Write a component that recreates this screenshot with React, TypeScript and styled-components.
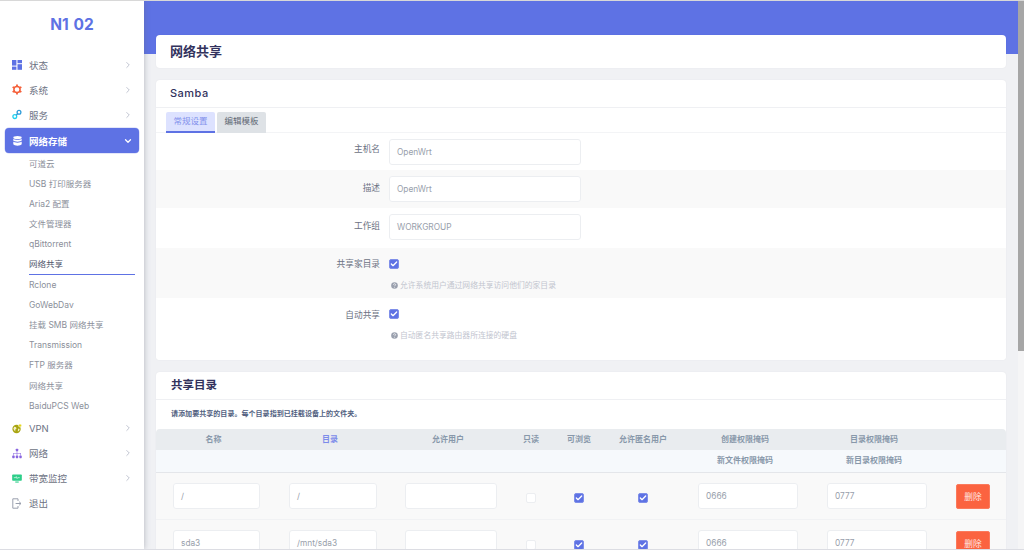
import React from "react";
import styled, { createGlobalStyle } from "styled-components";
import { ChevronRight, ChevronDown, Check } from "lucide-react";

const Global = createGlobalStyle`
  html, body { margin: 0; padding: 0; height: 100%; overflow: hidden; background: #fff; }
  #root { height: 100%; }
  * { box-sizing: border-box; }
  body { font-family: Inter, "Noto Sans CJK SC", sans-serif; color: #525f7f; }
`;

const Shell = styled.div`
  display: flex;
  height: 550px;
  border-top: 1px solid #d8d8d8;
  border-bottom: 1px solid #dcdde3;
  overflow: hidden;
`;
const Side = styled.aside`
  width: 144px;
  flex: none;
  background: #fff;
  box-shadow: 0 0 6px rgba(100, 105, 120, 0.45);
  position: relative;
  z-index: 2;
`;
const Logo = styled.div`
  height: 51px;
  padding-top: 15px;
  text-align: center;
  font-size: 15.5px;
  line-height: 18px;
  font-weight: 700;
  color: #5e72e4;
  word-spacing: 1px;
`;
const Menu = styled.nav`
  display: flex;
  flex-direction: column;
`;
const Item = styled.div<{ $active?: boolean }>`
  height: 25px;
  margin: ${p => (p.$active ? "1px 5px 0" : "0 5px")};
  padding: 0 6px 0 7px;
  display: flex;
  align-items: center;
  gap: 7px;
  font-size: 9.5px;
  color: ${p => (p.$active ? "#fff" : "#6c7283")};
  font-weight: ${p => (p.$active ? 600 : 400)};
  background: ${p => (p.$active ? "#5e72e4" : "transparent")};
  border-radius: 4px;
  box-shadow: ${p => (p.$active ? "0 0 0 0.5px #c8cef5" : "none")};
  svg.arrow { margin-left: auto; color: ${p => (p.$active ? "#fff" : "#b4b9c8")}; }
`;
const IconBox = styled.span`
  width: 10px;
  height: 11px;
  flex: none;
  display: inline-flex;
  align-items: center;
  justify-content: center;
`;
const SubList = styled.div`
  padding-top: 0.5px;
  display: flex;
  flex-direction: column;
`;
const Sub = styled.div<{ $active?: boolean }>`
  height: 20.2px;
  margin: 0 9px 0 29px;
  font-size: 8.5px;
  line-height: 20px;
  color: ${p => (p.$active ? "#4f566b" : "#8b8f9a")};
  border-bottom: ${p => (p.$active ? "1px solid #5e72e4" : "none")};
`;
const Main = styled.main`
  flex: 1;
  min-width: 0;
  height: 100%;
  overflow: hidden;
  background: #f0f1f4;
  position: relative;
`;
const ScrollTrack = styled.div`
  width: 6px;
  flex: none;
  background: #f5f5f6;
`;
const ScrollThumb = styled.div`
  height: 350px;
  background: #a6a6a6;
`;
const Banner = styled.div`
  position: absolute;
  left: 0;
  right: 0;
  top: 0;
  height: 53px;
  background: #5e72e4;
`;
const Content = styled.div`
  position: relative;
  padding: 34px 12px 24px;
  display: flex;
  flex-direction: column;
  gap: 12px;
`;
const Card = styled.section`
  background: #fff;
  border-radius: 4px;
  box-shadow: 0 0 2px rgba(50, 50, 93, 0.06);
  overflow: hidden;
`;
const PageTitle = styled.h2`
  margin: 0;
  height: 33px;
  padding-left: 14px;
  font-size: 13px;
  line-height: 33px;
  font-weight: 700;
  color: #32325d;
`;
const SambaHead = styled.h3`
  margin: 0;
  height: 28px;
  padding-left: 14px;
  font-size: 11px;
  line-height: 27px;
  font-weight: 500;
  letter-spacing: 0.5px;
  color: #32325d;
  border-bottom: 1px solid #eff0f3;
`;
const Tabs = styled.div`
  display: flex;
  gap: 2px;
  height: 25px;
  padding: 4px 0 0 10px;
  border-bottom: 1px solid #f3f4f6;
`;
const Tab = styled.div<{ $active?: boolean }>`
  width: 49px;
  height: 21px;
  text-align: center;
  font-size: 8.5px;
  line-height: 19px;
  border-radius: 2px 2px 0 0;
  background: ${p => (p.$active ? "#dde2ff" : "#dee2e6")};
  color: ${p => (p.$active ? "#8391ec" : "#5f6773")};
  border-bottom: ${p => (p.$active ? "2px solid #5e72e4" : "none")};
`;
const Row = styled.div<{ $alt?: boolean; $h: number }>`
  height: ${p => p.$h}px;
  background: ${p => (p.$alt ? "#f9f9f9" : "#fff")};
  display: grid;
  grid-template-columns: 224px 1fr;
  column-gap: 9px;
`;
const Label = styled.div<{ $top: number }>`
  text-align: right;
  font-size: 8.7px;
  line-height: 13px;
  padding-top: ${p => p.$top}px;
  color: #6c7283;
`;
const Field = styled.div`
  padding-top: 6px;
`;
const Input = styled.div<{ $w?: number }>`
  width: ${p => p.$w ?? 192}px;
  height: 26px;
  padding-left: 7px;
  background: #fff;
  border: 1px solid #eceef1;
  border-radius: 3px;
  font-size: 8.3px;
  line-height: 24px;
  color: #98a0ab;
`;
const Box = styled.span<{ $on?: boolean }>`
  width: 10px;
  height: 10px;
  border-radius: 2px;
  display: inline-flex;
  align-items: center;
  justify-content: center;
  color: #fff;
  flex: none;
  background: ${p => (p.$on ? "#5e72e4" : "#fff")};
  border: 1px solid ${p => (p.$on ? "#7f8fe9" : "#eceef1")};
`;
const Help = styled.div`
  display: flex;
  align-items: center;
  gap: 2px;
  margin: 11px 0 0 2px;
  font-size: 7.8px;
  line-height: 10px;
  color: #c2c5cf;
`;
const CheckField = styled.div`
  padding-top: 11px;
  line-height: 0;
`;
const SectionTitle = styled.h3`
  margin: 0;
  height: 28px;
  padding-left: 15px;
  font-size: 11.5px;
  line-height: 27px;
  font-weight: 700;
  color: #32325d;
  border-bottom: 1px solid #eff0f3;
`;
const Note = styled.p`
  margin: 0;
  height: 29px;
  padding: 9px 0 0 15px;
  font-size: 7.05px;
  line-height: 10px;
  font-weight: 700;
  color: #525f7f;
`;
const cols = "121px 112px 124px 36px 60px 68px 142px 116px 71px";
const HeadRow = styled.div<{ $second?: boolean }>`
  display: grid;
  grid-template-columns: ${cols};
  height: ${p => (p.$second ? "23px" : "21px")};
  background: ${p => (p.$second ? "#f6f9fc" : "#e9ecef")};
  border-radius: ${p => (p.$second ? "0" : "4px 4px 0 0")};
  border-bottom: ${p => (p.$second ? "1px solid #e4e6ea" : "none")};
`;
const HeadCell = styled.div<{ $primary?: boolean; $shift?: boolean }>`
  text-align: center;
  padding-right: ${p => (p.$shift ? "6px" : "0")};
  font-size: 8px;
  line-height: 21px;
  font-weight: 600;
  color: ${p => (p.$primary ? "#7c8bea" : "#8898aa")};
`;
const DataRow = styled.div`
  display: grid;
  grid-template-columns: ${cols};
  height: 47px;
  background: #f9f9f9;
  border-bottom: 1.5px solid #f1f2f4;
  align-items: start;
`;
const Cell = styled.div<{ $top: number }>`
  display: flex;
  justify-content: center;
  padding-top: ${p => p.$top}px;
`;
const ActionCell = styled.div`
  display: flex;
  justify-content: center;
  padding: 11px 0 0 5px;
`;
const Del = styled.button`
  width: 34px;
  height: 25px;
  padding: 0;
  border: 1px solid #fb7a5c;
  border-radius: 2px;
  background: #fb6340;
  color: #ffe9e3;
  font: 400 8.7px Inter, "Noto Sans CJK SC", sans-serif;
`;

const Dash = () => (
  <svg width="10" height="10" viewBox="0 0 10 10" fill="#5e72e4">
    <rect x="0" y="0" width="4.4" height="5.6" />
    <rect x="0" y="6.6" width="4.4" height="3.2" />
    <rect x="5.5" y="0" width="4.5" height="3.2" />
    <rect x="5.5" y="4.2" width="4.5" height="5.6" />
  </svg>
);
const Gear = () => (
  <svg width="11" height="11" viewBox="0 0 11 11">
    <circle cx="5.5" cy="5.5" r="3.4" fill="none" stroke="#f5603a" strokeWidth="1.7" />
    <g stroke="#f5603a" strokeWidth="2">
      <path d="M5.5 0v1.8M5.5 9.2V11M.7 2.7l1.6.9M8.7 7.4l1.6.9M.7 8.3l1.6-.9M8.7 3.6l1.6-.9" />
    </g>
  </svg>
);
const Links = () => (
  <svg width="10" height="11" viewBox="0 0 10 11" fill="none" strokeWidth="1.3">
    <circle cx="7" cy="3.2" r="1.9" stroke="#2c9bd8" />
    <circle cx="2.8" cy="7.6" r="1.9" stroke="#20d0ee" />
    <path d="M5.6 4.6L4.2 6.2" stroke="#2c9bd8" />
  </svg>
);
const Db = () => (
  <svg width="9" height="10" viewBox="0 0 9 10" fill="#fff">
    <ellipse cx="4.5" cy="1.6" rx="4.2" ry="1.5" />
    <path d="M.3 2.7C1.2 4 7.8 4 8.7 2.7V4.6C7.8 6 1.2 6 .3 4.6zM.3 5.6C1.2 7 7.8 7 8.7 5.6V8.3C7.8 10.2 1.2 10.2 .3 8.3z" />
  </svg>
);
const Globe = () => (
  <svg width="11" height="11" viewBox="0 0 11 11">
    <circle cx="5" cy="6" r="4.6" fill="#a8a410" />
    <path d="M2.5 3.5l2 .6.4 1.6-1.5 1.2.5 2-1.6-1.4-.8-2zM6.8 5.5l1.6.5-.6 2-1.5.9z" fill="#f3f0c6" />
    <circle cx="8.8" cy="2.2" r="1.7" fill="#e6d81e" stroke="#fff" strokeWidth=".5" />
  </svg>
);
const Sitemap = () => (
  <svg width="11" height="11" viewBox="0 0 11 11" fill="#8965e0">
    <rect x="4.2" y="0.3" width="2.6" height="2.8" rx=".6" />
    <rect x="0.3" y="7.8" width="2.6" height="2.8" rx=".6" />
    <rect x="4.2" y="7.8" width="2.6" height="2.8" rx=".6" />
    <rect x="8.1" y="7.8" width="2.6" height="2.8" rx=".6" />
    <path d="M5.2 3h.6v2h4v2.8h-.6V5.6H5.8v2.2h-.6V5.6H1.9v2.2h-.6V5h3.9z" />
  </svg>
);
const Monitor = () => (
  <svg width="11" height="11" viewBox="0 0 11 11">
    <rect x="0.2" y="1" width="10.6" height="7" rx=".8" fill="#2dce89" />
    <rect x="3.6" y="8.8" width="3.8" height="1.2" fill="#2dce89" />
    <path d="M2 4.6h2l.7-1.2.9 2.2.7-1h2.2" fill="none" stroke="#fff" strokeWidth=".7" />
  </svg>
);
const Exit = () => (
  <svg width="10" height="11" viewBox="0 0 10 11" fill="none" stroke="#9aa0ae" strokeWidth="1">
    <path d="M6 3V.8H.8v9.4H6V8" />
    <path d="M3.6 5.5h5.4M7.2 3.8L9 5.5 7.2 7.2" />
  </svg>
);
const HelpIcon = () => (
  <svg width="7" height="7" viewBox="0 0 7 7">
    <circle cx="3.5" cy="3.5" r="3.3" fill="#9aa0ae" />
    <path d="M2.4 2.7c0-1.3 2.2-1.3 2.2 0 0 .8-1.1.8-1.1 1.5" fill="none" stroke="#fff" strokeWidth=".7" />
    <circle cx="3.5" cy="5.3" r=".45" fill="#fff" />
  </svg>
);

const Tick = () => <Box $on><Check size={8} strokeWidth={4} /></Box>;

const subs = ["可道云", "USB 打印服务器", "Aria2 配置", "文件管理器", "qBittorrent", "网络共享", "Rclone", "GoWebDav", "挂载 SMB 网络共享", "Transmission", "FTP 服务器", "网络共享", "BaiduPCS Web"];
const shares = [
  { name: "/", dir: "/" },
  { name: "sda3", dir: "/mnt/sda3" },
];
const head1: [string, boolean?][] = [["名称"], ["目录", true], ["允许用户"], ["只读"], ["可浏览"], ["允许匿名用户"], ["创建权限掩码"], ["目录权限掩码"], [""]];
const head2 = ["", "", "", "", "", "", "新文件权限掩码", "新目录权限掩码", ""];
const shifted = [true, true, true, false, false, false, true, true, false];

const Arrow = () => <ChevronRight className="arrow" size={10} strokeWidth={2} />;

export default function App() {
  return (
    <Shell>
      <Global />
      <Side>
        <Logo>N1 02</Logo>
        <Menu>
          <Item><IconBox><Dash /></IconBox>状态<Arrow /></Item>
          <Item><IconBox><Gear /></IconBox>系统<Arrow /></Item>
          <Item><IconBox><Links /></IconBox>服务<Arrow /></Item>
          <Item $active><IconBox><Db /></IconBox>网络存储<ChevronDown className="arrow" size={10} strokeWidth={3} /></Item>
          <SubList>
            {subs.map((s, i) => <Sub key={i} $active={i === 5}>{s}</Sub>)}
          </SubList>
          <Item><IconBox><Globe /></IconBox>VPN<Arrow /></Item>
          <Item><IconBox><Sitemap /></IconBox>网络<Arrow /></Item>
          <Item><IconBox><Monitor /></IconBox>带宽监控<Arrow /></Item>
          <Item><IconBox><Exit /></IconBox>退出</Item>
        </Menu>
      </Side>
      <Main>
        <Banner />
        <Content>
          <Card><PageTitle>网络共享</PageTitle></Card>
          <Card>
            <SambaHead>Samba</SambaHead>
            <Tabs>
              <Tab $active>常规设置</Tab>
              <Tab>编辑模板</Tab>
            </Tabs>
            <Row $h={37}><Label $top={10}>主机名</Label><Field><Input>OpenWrt</Input></Field></Row>
            <Row $h={38} $alt><Label $top={12}>描述</Label><Field><Input>OpenWrt</Input></Field></Row>
            <Row $h={40}><Label $top={12}>工作组</Label><Field><Input>WORKGROUP</Input></Field></Row>
            <Row $h={50} $alt>
              <Label $top={10}>共享家目录</Label>
              <CheckField><Tick /><Help><HelpIcon />允许系统用户通过网络共享访问他们的家目录</Help></CheckField>
            </Row>
            <Row $h={62}>
              <Label $top={11}>自动共享</Label>
              <CheckField><Tick /><Help><HelpIcon />自动匿名共享路由器所连接的硬盘</Help></CheckField>
            </Row>
          </Card>
          <Card>
            <SectionTitle>共享目录</SectionTitle>
            <Note>请添加要共享的目录。每个目录指到已挂载设备上的文件夹。</Note>
            <HeadRow>{head1.map(([t, p], i) => <HeadCell key={i} $primary={p} $shift={shifted[i]}>{t}</HeadCell>)}</HeadRow>
            <HeadRow $second>{head2.map((t, i) => <HeadCell key={i} $shift={shifted[i]}>{t}</HeadCell>)}</HeadRow>
            {shares.map(s => (
              <DataRow key={s.name}>
                <Cell $top={10}><Input $w={87}>{s.name}</Input></Cell>
                <Cell $top={10}><Input $w={88}>{s.dir}</Input></Cell>
                <Cell $top={10}><Input $w={92} /></Cell>
                <Cell $top={20}><Box /></Cell>
                <Cell $top={20}><Tick /></Cell>
                <Cell $top={20}><Tick /></Cell>
                <Cell $top={10}><Input $w={100}>0666</Input></Cell>
                <Cell $top={10}><Input $w={100}>0777</Input></Cell>
                <ActionCell><Del>删除</Del></ActionCell>
              </DataRow>
            ))}
          </Card>
        </Content>
      </Main>
      <ScrollTrack><ScrollThumb /></ScrollTrack>
    </Shell>
  );
}
